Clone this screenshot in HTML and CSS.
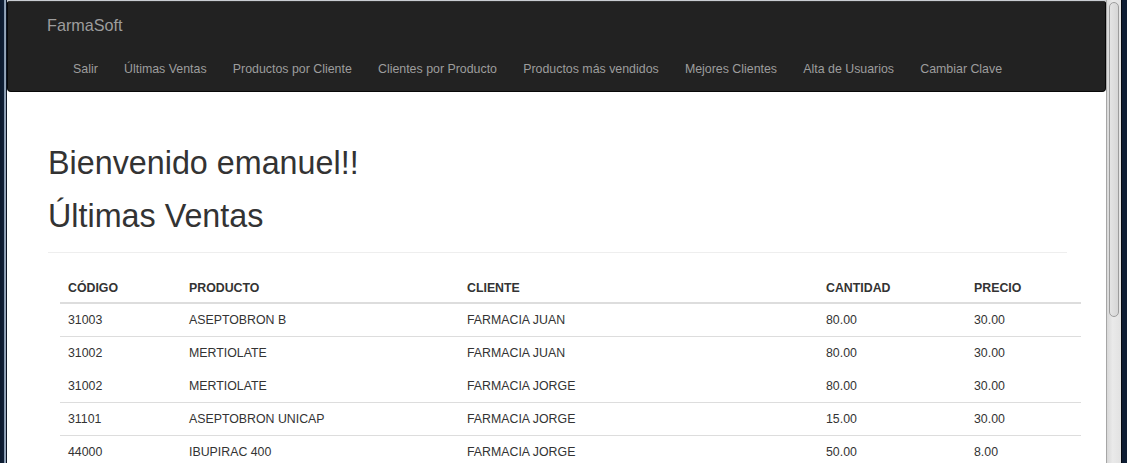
FILE: index.html
```html
<!DOCTYPE html>
<html lang="es">
<head>
<meta charset="utf-8">
<title>FarmaSoft</title>
<link rel="stylesheet" href="styles.css">
</head>
<body>
<div class="frame">
  <div class="edge-left"></div>
  <div class="viewport">
    <nav class="navbar">
      <div class="brand-row"><a class="brand" href="#">FarmaSoft</a></div>
      <ul class="nav">
        <li><a href="#">Salir</a></li>
        <li><a href="#">Últimas Ventas</a></li>
        <li><a href="#">Productos por Cliente</a></li>
        <li><a href="#">Clientes por Producto</a></li>
        <li><a href="#">Productos más vendidos</a></li>
        <li><a href="#">Mejores Clientes</a></li>
        <li><a href="#">Alta de Usuarios</a></li>
        <li><a href="#">Cambiar Clave</a></li>
      </ul>
    </nav>
    <main class="container">
      <h1 class="welcome">Bienvenido emanuel!!</h1>
      <h1 class="page-title">Últimas Ventas</h1>
      <table class="sales">
        <colgroup>
          <col class="c-code">
          <col class="c-prod">
          <col class="c-client">
          <col class="c-qty">
          <col class="c-price">
        </colgroup>
        <thead>
          <tr><th>CÓDIGO</th><th>PRODUCTO</th><th>CLIENTE</th><th>CANTIDAD</th><th>PRECIO</th></tr>
        </thead>
        <tbody>
          <tr><td>31003</td><td>ASEPTOBRON B</td><td>FARMACIA JUAN</td><td>80.00</td><td>30.00</td></tr>
          <tr><td>31002</td><td>MERTIOLATE</td><td>FARMACIA JUAN</td><td>80.00</td><td>30.00</td></tr>
          <tr class="no-line"><td>31002</td><td>MERTIOLATE</td><td>FARMACIA JORGE</td><td>80.00</td><td>30.00</td></tr>
          <tr><td>31101</td><td>ASEPTOBRON UNICAP</td><td>FARMACIA JORGE</td><td>15.00</td><td>30.00</td></tr>
          <tr><td>44000</td><td>IBUPIRAC 400</td><td>FARMACIA JORGE</td><td>50.00</td><td>8.00</td></tr>
        </tbody>
      </table>
    </main>
  </div>
  <div class="scrollbar"><div class="thumb"></div></div>
  <div class="edge-right"></div>
</div>
</body>
</html>
```

FILE: styles.css
```css
* { box-sizing: border-box; }

html, body {
  margin: 0;
  padding: 0;
  height: 463px;
  overflow: hidden;
  background: #0d1b2e;
  font-family: "Liberation Sans", Arial, Helvetica, sans-serif;
}

.frame {
  display: flex;
  height: 463px;
}

.edge-left {
  width: 7px;
  flex: none;
  background: linear-gradient(to right, #0c1a2e 0, #0f1f36 4px, #7f93ab 4px, #9aaabd 6px, #0a1424 6px);
}

.viewport {
  width: 1099px;
  flex: none;
  background: #fff;
  border-top: 1px solid #c9cdd2;
  overflow: hidden;
}

.navbar {
  height: 91px;
  background: #222;
  border: 1px solid #080808;
  border-top-color: #333;
  border-radius: 2px 2px 4px 4px;
  display: flex;
  flex-direction: column;
}

.brand-row {
  height: 45px;
  display: flex;
  align-items: center;
  padding-left: 39px;
}

.brand {
  color: #9d9d9d;
  font-size: 16.2px;
  text-decoration: none;
  line-height: 20px;
}

.nav {
  list-style: none;
  margin: 0;
  padding: 0 0 0 52px;
  height: 44px;
  display: flex;
  align-items: center;
}

.nav a {
  display: block;
  padding: 0 13.1px;
  color: #9d9d9d;
  font-size: 12.38px;
  line-height: 18px;
  text-decoration: none;
}

.container {
  padding: 0 39px 0 41px;
}

h1 {
  font-weight: 500;
  font-size: 32.3px;
  line-height: 34.8px;
  color: #333;
  margin: 0;
}

.welcome {
  margin-top: 53.5px;
}

.page-title {
  margin-top: 19.2px;
  padding-bottom: 17.6px;
  border-bottom: 1px solid #eee;
}

.sales {
  margin: 17px 0 0 12px;
  width: 1021px;
  table-layout: fixed;
  border-collapse: collapse;
  font-size: 12.35px;
  color: #333;
}

.c-code { width: 121px; }
.c-prod { width: 278px; }
.c-client { width: 359px; }
.c-qty { width: 148px; }
.c-price { width: 115px; }

.sales th,
.sales td {
  text-align: left;
  padding: 7px 8px;
  line-height: 18px;
  white-space: nowrap;
}

.sales th {
  font-weight: bold;
  padding-top: 9px;
  padding-bottom: 5px;
  border-bottom: 2px solid #ddd;
}

.sales td {
  border-top: 1px solid #ddd;
}

.sales tbody tr:first-child td {
  border-top: 0;
}

.sales tr.no-line td {
  border-top-color: transparent;
}

.scrollbar {
  width: 15px;
  flex: none;
  background: linear-gradient(to right, #d8d8d8, #eaeaea 40%, #e2e2e2);
  border-left: 1px solid #a6a6a6;
  padding: 2px 2px 0 2px;
}

.thumb {
  height: 315px;
  border: 1px solid #9c9c9c;
  border-radius: 6px;
  background: linear-gradient(to right, #e4e4e4, #d6d6d6);
}

.edge-right {
  width: 6px;
  flex: none;
  background: linear-gradient(to right, #050a12 0, #050a12 1px, #0e1d33 1px);
}
```
